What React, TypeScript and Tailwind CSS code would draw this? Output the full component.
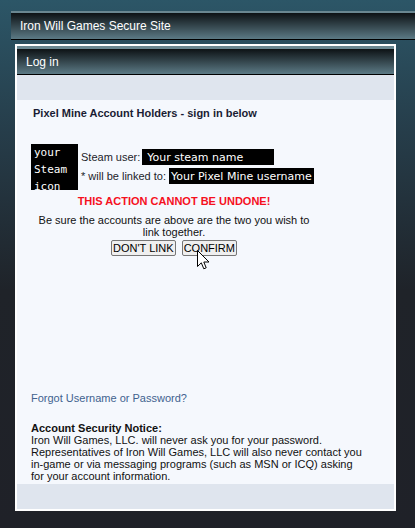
import React from 'react';

const font = { fontFamily: '"Liberation Sans", Arial, sans-serif' };

function Cursor() {
  return (
    <svg
      className="absolute left-[180px] top-[150px]"
      width="13"
      height="20"
      viewBox="0 0 13 20"
    >
      <path
        d="M0.5 0.5 L0.5 16.5 L4.3 12.8 L6.8 18.8 L9.2 17.8 L6.8 12 L12 12 Z"
        fill="white"
        stroke="black"
        strokeWidth="1"
        strokeLinejoin="miter"
      />
    </svg>
  );
}

export default function App() {
  return (
    <div
      className="w-[415px] h-[528px] overflow-hidden pt-[11px] bg-[linear-gradient(to_bottom,#2c5667_0%,#263d4a_25%,#1f2329_55%,#1f2128_100%)]"
      style={font}
    >
      {/* top bar */}
      <div className="ml-[11px] h-[29px] flex flex-col">
        <div className="h-[2px] bg-[#6a8791]" />
        <div className="flex-1 flex items-center pl-[9px] text-[12px] text-white bg-[linear-gradient(to_bottom,#0d1215,#5c7a85)]">
          Iron Will Games Secure Site
        </div>
        <div className="h-[1px] bg-black" />
      </div>

      {/* panel */}
      <div className="ml-[15px] mt-[4px] w-[381px] h-[467px] border-2 border-white flex flex-col bg-[#f5f8fd]">
        <div className="h-[29px] flex flex-col">
          <div className="h-[3px] bg-[#6a8791]" />
          <div className="flex-1 flex items-center pl-[9px] text-[12px] text-white bg-[linear-gradient(to_bottom,#0d1215,#5c7a85)]">
            Log in
          </div>
          <div className="h-[1px] bg-black" />
        </div>
        <div className="h-[25px] bg-[#dfe5ee]" />

        <div className="relative flex-1 pl-[14px] pt-[7px] text-[11px] leading-[13px] text-[#1c1c2a]">
          <p className="pl-[2px] font-bold text-[#1a1c33]">Pixel Mine Account Holders - sign in below</p>

          <div className="mt-[24px] flex items-start">
            <div
              className="w-[47px] h-[46px] overflow-hidden bg-black text-white pl-[3px] text-[11px] leading-[17px]"
              style={{ fontFamily: '"DejaVu Sans Mono", monospace' }}
            >
              your
              <br />
              Steam
              <br />
              icon
            </div>
            <div className="ml-[3px] mt-[5px] flex flex-col gap-[3px]">
              <div className="flex items-center h-[16px]">
                <span>Steam user:</span>
                <span
                  className="ml-[2px] w-[132px] h-[16px] bg-black text-white pl-[5px] text-[11px] leading-[17px]"
                  style={{ fontFamily: '"DejaVu Sans", sans-serif' }}
                >
                  Your steam name
                </span>
              </div>
              <div className="flex items-center h-[16px]">
                <span>* will be linked to:</span>
                <span
                  className="ml-[3px] h-[16px] bg-black text-white px-[2px] text-[11px] leading-[17px]"
                  style={{ fontFamily: '"DejaVu Sans", sans-serif' }}
                >
                  Your Pixel Mine username
                </span>
              </div>
            </div>
          </div>

          <div className="w-[286px] text-center">
            <p className="mt-[5px] font-bold text-[#f5101e]">THIS ACTION CANNOT BE UNDONE!</p>
            <p className="mt-[6px] leading-[12px] text-[#111]">
              Be sure the accounts are above are the two you wish to link together.
            </p>
            <div className="mt-[2px] flex justify-center gap-[6px]">
              <button className="h-[16px] px-[1px] text-[11px] leading-[14px] text-black bg-[#efefef] border border-[#767676] rounded-[2px]">
                DON'T LINK
              </button>
              <button className="h-[16px] px-[1px] text-[11px] leading-[14px] text-black bg-[#efefef] border border-[#767676] rounded-[2px]">
                CONFIRM
              </button>
            </div>
          </div>

          <p className="mt-[136px] leading-[12px] text-[#41628f]">
            <a>Forgot Username</a> or <a>Password?</a>
          </p>

          <div className="mt-[18px] leading-[12px] text-[#111]">
            <p className="font-bold">Account Security Notice:</p>
            <p>
              Iron Will Games, LLC. will never ask you for your password.
              <br />
              Representatives of Iron Will Games, LLC will also never contact you
              <br />
              in-game or via messaging programs (such as MSN or ICQ) asking
              <br />
              for your account information.
            </p>
          </div>

          <Cursor />
        </div>

        <div className="h-[25px] bg-[#dfe5ee]" />
      </div>
    </div>
  );
}
